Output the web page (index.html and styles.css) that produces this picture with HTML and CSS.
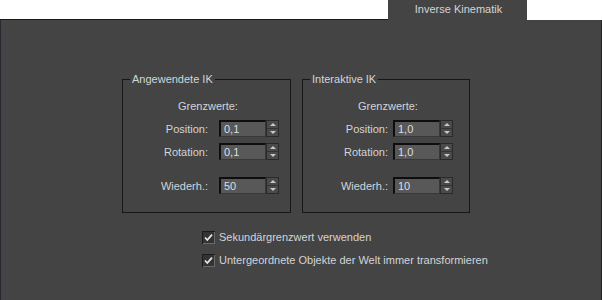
FILE: index.html
```html
<!DOCTYPE html>
<html lang="de">
<head>
    <meta charset="UTF-8">
    <title>Inverse Kinematik</title>
    <link rel="stylesheet" href="styles.css">
</head>
<body>
    <div class="tab-bar">
        <div class="tab-spacer"></div>
        <div class="tab">Inverse Kinematik</div>
        <div class="tab-end"></div>
    </div>

    <div class="panel">
        <div class="groups">
            <fieldset class="group">
                <legend>Angewendete IK</legend>
                <div class="limits limits-wide">Grenzwerte:</div>
                <div class="field-grid field-grid-wide">
                    <label>Position:</label>
                    <div class="spinner"><input type="text" value="0,1"><span class="arrows"><i class="up"></i><i class="down"></i></span></div>
                    <label>Rotation:</label>
                    <div class="spinner"><input type="text" value="0,1"><span class="arrows"><i class="up"></i><i class="down"></i></span></div>
                    <label class="iter">Wiederh.:</label>
                    <div class="spinner iter"><input type="text" value="50"><span class="arrows"><i class="up"></i><i class="down"></i></span></div>
                </div>
            </fieldset>

            <fieldset class="group">
                <legend>Interaktive IK</legend>
                <div class="limits">Grenzwerte:</div>
                <div class="field-grid">
                    <label>Position:</label>
                    <div class="spinner"><input type="text" value="1,0"><span class="arrows"><i class="up"></i><i class="down"></i></span></div>
                    <label>Rotation:</label>
                    <div class="spinner"><input type="text" value="1,0"><span class="arrows"><i class="up"></i><i class="down"></i></span></div>
                    <label class="iter">Wiederh.:</label>
                    <div class="spinner iter"><input type="text" value="10"><span class="arrows"><i class="up"></i><i class="down"></i></span></div>
                </div>
            </fieldset>
        </div>

        <div class="options">
            <div class="check-row">
                <svg class="check" width="13" height="13" viewBox="0 0 13 13">
                    <rect x="0" y="0" width="13" height="13" fill="#1c1c1c"/>
                    <rect x="1" y="1" width="12" height="12" fill="#6a6a6a"/>
                    <rect x="1" y="1" width="11" height="11" fill="#333333"/>
                    <path d="M3 6.5 L5.3 9 L10 3.6" fill="none" stroke="#e6e6e6" stroke-width="1.8"/>
                </svg>
                <span>Sekundärgrenzwert verwenden</span>
            </div>
            <div class="check-row">
                <svg class="check" width="13" height="13" viewBox="0 0 13 13">
                    <rect x="0" y="0" width="13" height="13" fill="#1c1c1c"/>
                    <rect x="1" y="1" width="12" height="12" fill="#6a6a6a"/>
                    <rect x="1" y="1" width="11" height="11" fill="#333333"/>
                    <path d="M3 6.5 L5.3 9 L10 3.6" fill="none" stroke="#e6e6e6" stroke-width="1.8"/>
                </svg>
                <span>Untergeordnete Objekte der Welt immer transformieren</span>
            </div>
        </div>
    </div>
</body>
</html>
```

FILE: styles.css
```css
body {
    margin: 0;
    padding: 0;
    width: 602px;
    height: 300px;
    overflow: hidden;
    background-color: #ffffff;
    font-family: "Liberation Sans", Arial, sans-serif;
    font-size: 11px;
    color: #d2d4d8;
}
.tab-bar {
    display: flex;
    height: 20px;
}
.tab-spacer {
    flex: 1;
    border-bottom: 1px solid #1a1a1a;
    box-sizing: border-box;
}
.tab {
    width: 139px;
    background-color: #444444;
    text-align: center;
    line-height: 19px;
    padding-left: 2px;
    box-sizing: border-box;
}
.tab-end {
    width: 75px;
}
.panel {
    height: 280px;
    background-color: #444444;
    border-left: 1px solid #262a30;
    border-right: 1px solid #222222;
    box-sizing: border-box;
    padding-top: 52px;
}
.groups {
    display: flex;
    gap: 11px;
    padding-left: 121px;
}
.group {
    margin: 0;
    padding: 0;
    min-width: 0;
    border: 1px solid #161616;
    box-sizing: border-box;
    height: 141px;
}
.group:first-child {
    width: 169px;
}
.group:last-child {
    width: 168px;
}
.group legend {
    margin-left: 7px;
    padding: 0 2px;
    line-height: 14px;
}
.limits {
    margin-top: 13px;
    padding-left: 55px;
    line-height: 14px;
}
.limits-wide {
    padding-left: 55px;
}
.field-grid {
    display: grid;
    grid-template-columns: 85px 60px;
    column-gap: 5px;
    row-gap: 6px;
    margin-top: 7px;
    align-items: center;
}
.field-grid-wide {
    column-gap: 11px;
}
.field-grid label {
    text-align: right;
    line-height: 16px;
}
.field-grid .iter {
    margin-top: 11px;
}
.spinner {
    display: flex;
    height: 17px;
}
.spinner input {
    width: 47px;
    height: 17px;
    box-sizing: border-box;
    margin: 0;
    padding: 0 0 0 3px;
    border-top: 2px solid #0e0e0e;
    border-left: 2px solid #0e0e0e;
    border-right: 1px solid #383838;
    border-bottom: 1px solid #383838;
    background-color: #585858;
    color: #dcdee2;
    font-family: "Liberation Sans", Arial, sans-serif;
    font-size: 11px;
    outline: none;
}
.arrows {
    display: flex;
    flex-direction: column;
    width: 13px;
    height: 17px;
    box-sizing: border-box;
    border: 1px solid #2a2a2a;
    background-color: #4a4a4a;
}
.arrows i {
    flex: 1;
    display: flex;
    align-items: center;
    justify-content: center;
}
.arrows .up {
    border-bottom: 1px solid #333333;
}
.arrows .up::before {
    content: "";
    border-left: 3px solid transparent;
    border-right: 3px solid transparent;
    border-bottom: 3px solid #c8c8c8;
}
.arrows .down::before {
    content: "";
    border-left: 3px solid transparent;
    border-right: 3px solid transparent;
    border-top: 3px solid #c8c8c8;
}
.options {
    padding-left: 201px;
    margin-top: 17px;
    display: flex;
    flex-direction: column;
    gap: 9px;
}
.check-row {
    display: flex;
    align-items: center;
    gap: 4px;
    line-height: 14px;
}
.check {
    display: block;
}
```
